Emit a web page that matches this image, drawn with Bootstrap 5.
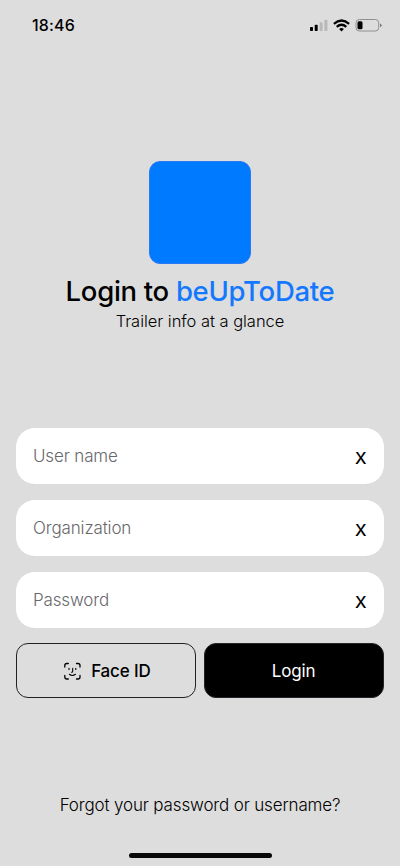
<!DOCTYPE html>
<html lang="en">
<head>
<meta charset="utf-8">
<meta name="viewport" content="width=device-width, initial-scale=1">
<title>Login to beUpToDate</title>
<link href="https://cdn.jsdelivr.net/npm/bootstrap@5.3.0/dist/css/bootstrap.min.css" rel="stylesheet">
<style>
body{font-family:Inter,"Liberation Sans",sans-serif;background:#ddd;color:#000;height:866px;overflow:hidden;font-size:17px;font-weight:300}
.status{height:51px;padding:0 18px 0 32px}
.clock{font-size:16px;font-weight:500;line-height:51px;letter-spacing:.15px}
.hero{padding-top:110px;height:377px}
.logo{width:102px;height:103px;border-radius:11px;background:#007aff;border:1px solid #2b78f5}
.title{font-size:27.5px;font-weight:500;line-height:34px;letter-spacing:-.3px;margin:10px 0 0}
.brand{color:#1478ff}
.sub{font-size:16.5px;line-height:22px;margin:2px 0 0;letter-spacing:-.03px}
.login-form{padding:0 16.5px 0 16px;gap:16px}
.field{height:56px;border-radius:19px;padding:2px 17px 0}
.field .form-control{font-size:17px;font-weight:300;letter-spacing:-.15px}
.field .form-control::placeholder{color:#68686b;opacity:1}
.clear{font-size:16.5px;font-weight:500;line-height:24px;padding-top:1px!important;color:#000}
.action{height:55px;border-radius:12px;font-size:17px;letter-spacing:-.15px;padding:8px 12px 6px}
.face{border:1px solid #222;font-weight:500;gap:9px;color:#000;padding-left:14px}
.form-actions{margin-top:-1px!important}
.forgot{margin-top:95px;line-height:24px;letter-spacing:-.15px;color:#000}
.home{width:143px;height:5px;border-radius:3px;background:#080808;margin-top:36px}
</style>
</head>
<body class="d-flex flex-column">
<header class="status d-flex justify-content-between align-items-center flex-shrink-0">
  <span class="clock">18:46</span>
  <svg width="73" height="16" viewBox="0 0 73 16" aria-hidden="true">
    <rect x="1" y="9" width="3" height="4" rx=".8"/><rect x="5.7" y="6.8" width="3" height="6.2" rx=".8"/>
    <rect x="10.6" y="4.2" width="3" height="8.8" rx=".8" fill="#b8b8b8"/><rect x="15.4" y="1.7" width="3" height="11.3" rx=".8" fill="#b8b8b8"/>
    <g fill="none" stroke="#000" stroke-width="2.2"><path d="M24.9 5.8Q32.5-.8 40.1 5.8M27.7 8.9Q32.5 4.6 37.3 8.9"/></g>
    <path d="M30.1 10.9Q32.5 9 34.9 10.9L32.5 13.4Z"/>
    <rect x="47" y="1.5" width="22.7" height="11.5" rx="3.3" fill="none" stroke="#909090"/>
    <rect x="48.5" y="3.3" width="5" height="8" rx="1.5"/><path d="M71.2 5.4v3.8q1.3-.5 1.3-1.9T71.2 5.4Z" fill="#666"/>
  </svg>
</header>
<section class="hero d-flex flex-column align-items-center flex-shrink-0">
  <div class="logo flex-shrink-0"></div>
  <h1 class="title text-nowrap">Login to <span class="brand">beUpToDate</span></h1>
  <p class="sub text-nowrap">Trailer info at a glance</p>
</section>
<form class="login-form d-flex flex-column">
  <div class="field bg-white d-flex align-items-center">
    <input class="form-control border-0 p-0 shadow-none bg-transparent" type="text" placeholder="User name" aria-label="User name">
    <button class="clear btn border-0 p-0" type="button">X</button>
  </div>
  <div class="field bg-white d-flex align-items-center">
    <input class="form-control border-0 p-0 shadow-none bg-transparent" type="text" placeholder="Organization" aria-label="Organization">
    <button class="clear btn border-0 p-0" type="button">X</button>
  </div>
  <div class="field bg-white d-flex align-items-center">
    <input class="form-control border-0 p-0 shadow-none bg-transparent" type="password" placeholder="Password" aria-label="Password">
    <button class="clear btn border-0 p-0" type="button">X</button>
  </div>
  <div class="form-actions row g-2">
    <div class="col-6 mt-0"><button class="action face btn w-100 d-flex align-items-center justify-content-center" type="button">
      <svg width="19" height="19" viewBox="0 0 19 19" fill="none" stroke="#000" stroke-width="1.3" stroke-linecap="round" aria-hidden="true">
        <path d="M1.8 5V3.5Q1.8 1.5 3.8 1.5H5.3M13.5 1.5H15Q17 1.5 17 3.5V5M17 13.5V15Q17 17 15 17H13.5M5.3 17H3.8Q1.8 17 1.8 15V13.5"/>
        <path stroke-width="1.1" d="M6 6.3v1.2M12.8 6.3v1.2M9.7 6.3v3q0 1-1.1 1M6.4 12.3q3 2.4 6 0"/>
      </svg>
      <span>Face ID</span></button></div>
    <div class="col-6 mt-0"><button class="action btn btn-dark bg-black border-black w-100" type="button">Login</button></div>
  </div>
</form>
<a class="forgot text-center text-decoration-none" href="#">Forgot your password or username?</a>
<div class="home mx-auto"></div>
<script src="https://cdn.jsdelivr.net/npm/bootstrap@5.3.0/dist/js/bootstrap.bundle.min.js"></script>
</body>
</html>
